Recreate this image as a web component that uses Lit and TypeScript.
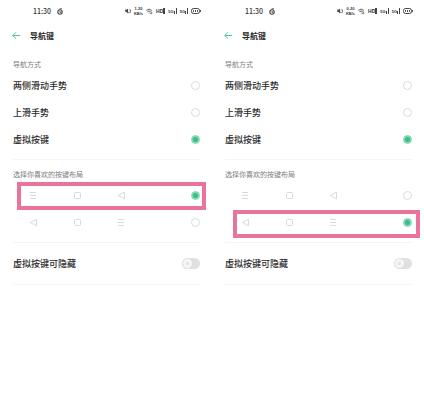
import { LitElement, html, css, svg, nothing } from "lit";
import { customElement, property } from "lit/decorators.js";

type NavKey = "menu" | "home" | "back";

const NAV_MODES = ["两侧滑动手势", "上滑手势", "虚拟按键"];
const KEY_LAYOUTS: { name: string; keys: NavKey[] }[] = [
  { name: "菜单、主页、返回", keys: ["menu", "home", "back"] },
  { name: "返回、主页、菜单", keys: ["back", "home", "menu"] },
];

const KEY_SHAPES = {
  menu: svg`<path d="M1 1.5H7M1 4.5H7M1 7.5H7" />`,
  home: svg`<rect x="1.5" y="1.5" width="6" height="6" rx="1" />`,
  back: svg`<path d="M7.5 1.2V7.8L1.3 4.5Z" stroke-linejoin="round" />`,
};

@customElement("status-bar")
class StatusBar extends LitElement {
  @property() speed = "1.20";

  static styles = css`
    :host {
      display: flex;
      justify-content: space-between;
      align-items: center;
      height: 22px;
      padding: 0 11px 0 33px;
      color: #333;
      font-size: 7px;
    }
    .group {
      display: flex;
      align-items: center;
    }
    .time {
      gap: 6px;
    }
    .icons {
      gap: 3px;
    }
    svg {
      display: block;
      fill: none;
      stroke: #444;
    }
    .solid {
      fill: #444;
      stroke: none;
    }
    .rate {
      display: grid;
      justify-items: center;
      font-family: "Liberation Sans", sans-serif;
      font-size: 4px;
      font-weight: 700;
      line-height: 5px;
    }
    .tag {
      font-family: "Liberation Sans", sans-serif;
      font-size: 5px;
      font-weight: 700;
      line-height: 8px;
    }
  `;

  private signal() {
    return html`<span class="group">
      <span class="rate">5G</span>
      <svg class="solid" width="3" height="6" viewBox="0 0 3 6">
        <path d="M0 3h1v3H0zM2 0h1v6H2z" />
      </svg>
    </span>`;
  }

  render() {
    return html`
      <span class="group time">
        <span>11:30</span>
        <svg width="6" height="7" viewBox="0 0 6 7">
          <circle cx="3" cy="4" r="2.2" stroke-width="1.1" />
          <path d="M2.4 1.2L4.8.5M3 3v1.4h1.2" stroke-width=".9" />
        </svg>
      </span>
      <span class="group icons">
        <svg width="6" height="6" viewBox="0 0 7 6">
          <path class="solid" d="M0 2h1.4L3.6.2v5.6L1.4 4H0z" />
          <path d="M.4.4L4.6 5.6M5 1.6h1.4v3H5" stroke-width=".8" />
        </svg>
        <span class="rate"><span>${this.speed}</span><span>KB/s</span></span>
        <svg width="7" height="7" viewBox="0 0 8 7">
          <path d="M.4 2.2Q3.5-.6 6.6 2.2M1.7 3.8Q3.5 2.2 5.3 3.8" />
          <path d="M3.5 5.6L4.2 4.8M6.5 3.5V6.6M5 5v1.6" stroke-width=".8" />
        </svg>
        <span class="group">
          <span class="tag">HD</span>
          <svg class="solid" width="2" height="6" viewBox="0 0 2 6">
            <path d="M0 0h2v6H0z" />
          </svg>
        </span>
        ${this.signal()}${this.signal()}
        <svg width="10" height="6" viewBox="0 0 10 6">
          <rect x=".5" y=".5" width="8" height="5" rx="2" />
          <path d="M2.5 2v2M4.5 2v2M6.5 2v2M9.5 2v2" stroke-width=".9" />
        </svg>
      </span>
    `;
  }
}

@customElement("nav-settings")
class NavSettings extends LitElement {
  @property({ type: Number }) layout = 0;

  static styles = css`
    :host {
      display: block;
      flex: 1;
      min-width: 0;
      color: #2a2a2a;
      font-size: 9px;
      font-weight: 500;
    }
    header {
      display: flex;
      align-items: center;
      gap: 10px;
      height: 27px;
      padding-left: 12px;
    }
    .back {
      display: flex;
      padding: 0;
      border: 0;
      background: none;
    }
    .back svg {
      fill: none;
      stroke: #4cc79a;
    }
    h1 {
      margin: 0;
      font-size: 8px;
      font-weight: 700;
    }
    main {
      padding: 7px 12px 0 13px;
    }
    fieldset {
      margin: 0;
      padding: 0 0 6px;
      border: 0;
      border-bottom: 1px solid #f5f5f5;
    }
    fieldset + fieldset {
      padding-top: 6px;
    }
    legend {
      float: left;
      width: 100%;
      padding: 0;
      color: #808080;
      font-size: 7px;
      font-weight: 400;
      line-height: 16px;
    }
    .row {
      position: relative;
      clear: both;
      display: flex;
      align-items: center;
      justify-content: space-between;
      height: 27px;
    }
    .keys {
      display: flex;
      gap: 35px;
      padding-left: 16px;
    }
    .keys svg {
      fill: none;
      stroke: #dadada;
    }
    .mark {
      position: absolute;
      inset: 0 -6px -1px 4px;
      border: 4px solid #ea7399;
      pointer-events: none;
    }
    .mark.low {
      inset: 1px -8px -2px 8px;
    }
    input {
      appearance: none;
      flex: none;
      margin: 0;
      border-radius: 9px;
    }
    input[type="radio"] {
      width: 9px;
      height: 9px;
      border: 1px solid #dcdcdc;
    }
    input[type="radio"]:checked {
      border-color: #7dd5b1;
      background: radial-gradient(circle, #36c088 2px, #c4ecda 4px);
    }
    .switch {
      display: flex;
      align-items: center;
      width: 18px;
      height: 11px;
      background: #e0e0e0;
    }
    .switch::before {
      content: "";
      box-sizing: border-box;
      width: 9px;
      height: 9px;
      margin-left: 1px;
      border: 3px solid #f6f6f6;
      border-radius: 9px;
      background: #e0e0e0;
    }
    .last {
      height: 41px;
      border-bottom: 1px solid #f5f5f5;
    }
  `;

  render() {
    return html`
      <status-bar speed=${this.layout === 0 ? "1.20" : "0.20"}></status-bar>
      <header>
        <button class="back" aria-label="返回">
          <svg width="8" height="9" viewBox="0 0 8 9">
            <path d="M8 4.5H.8M4 1.3L.8 4.5L4 7.7" />
          </svg>
        </button>
        <h1>导航键</h1>
      </header>
      <main>
        <fieldset>
          <legend>导航方式</legend>
          ${NAV_MODES.map(
            (mode, i) => html`<label class="row">
              <span>${mode}</span>
              <input type="radio" name="mode" ?checked=${i === 2} />
            </label>`
          )}
        </fieldset>
        <fieldset>
          <legend>选择你喜欢的按键布局</legend>
          ${KEY_LAYOUTS.map(
            ({ name, keys }, i) => html`<label class="row">
              <span class="keys">
                ${keys.map(
                  (key) => html`<svg width="9" height="9" viewBox="0 0 9 9">${KEY_SHAPES[key]}</svg>`
                )}
              </span>
              <input type="radio" name="layout" aria-label=${name} ?checked=${i === this.layout} />
              ${i === this.layout
                ? html`<span class="mark ${i === 1 ? "low" : ""}"></span>`
                : nothing}
            </label>`
          )}
        </fieldset>
        <label class="row last">
          <span>虚拟按键可隐藏</span>
          <input class="switch" type="checkbox" role="switch" />
        </label>
      </main>
    `;
  }
}

@customElement("app-root")
class AppRoot extends LitElement {
  static styles = css`
    :host {
      display: flex;
      min-height: 100vh;
      background: #fff;
      font-family: "Noto Sans CJK SC", "Noto Sans", sans-serif;
    }
  `;

  render() {
    return html`
      <nav-settings .layout=${0}></nav-settings>
      <nav-settings .layout=${1}></nav-settings>
    `;
  }
}
